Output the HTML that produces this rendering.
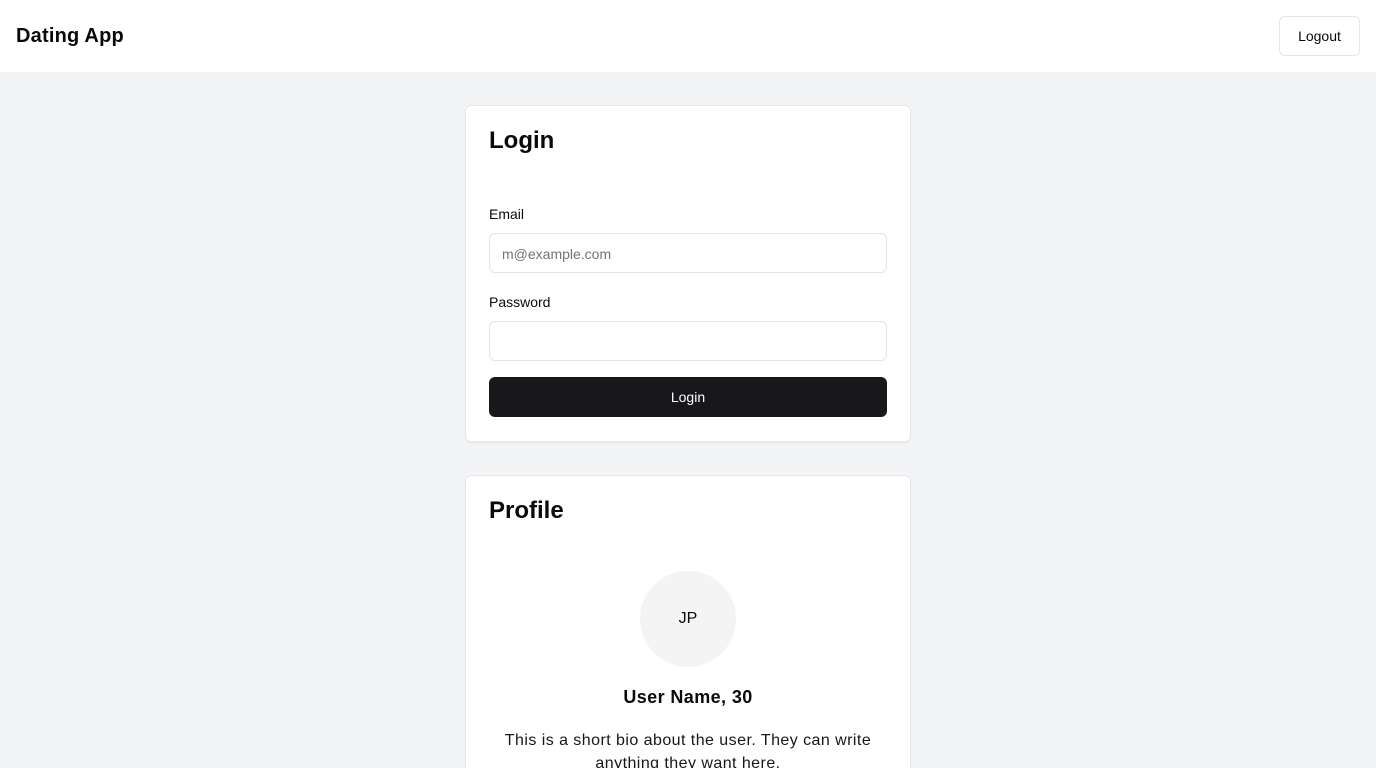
<!DOCTYPE html>
<html style="overflow:hidden"><head><meta charset="utf-8"><style>
*{box-sizing:border-box;margin:0;padding:0}
body{width:1376px;height:768px;overflow:hidden;background:#f3f4f6;font-family:"Liberation Sans",Arial,sans-serif;color:#0a0a0a;position:relative}
.hdr{position:absolute;left:0;top:0;width:1376px;height:72px;background:#fff}
.abs{position:absolute}
.card{position:absolute;left:465px;width:446px;background:#fff;border:1px solid #e5e7eb;border-radius:6px;box-shadow:0 1px 2px rgba(0,0,0,.05)}
.inp{position:absolute;left:489px;width:398px;height:40px;border:1px solid #e4e4e7;border-radius:6px;background:#fff}
</style></head><body>
<div class="hdr"></div>
<div class="abs" style="left:16px;top:24px;font-size:20px;font-weight:bold;line-height:24px;letter-spacing:0.2px">Dating App</div>
<div class="abs" style="left:1279px;top:16px;width:81px;height:40px;border:1px solid #e4e4e7;border-radius:6px;background:#fff;font-size:14px;line-height:38px;text-align:center">Logout</div>

<div class="card" style="top:105px;height:337px"></div>
<div class="abs" style="left:489px;top:126px;font-size:24px;font-weight:bold;line-height:30px">Login</div>
<div class="abs" style="left:489px;top:205px;font-size:14px;line-height:18px">Email</div>
<div class="inp" style="top:233px"></div>
<div class="abs" style="left:502px;top:245px;font-size:14px;line-height:18px;color:#737373">m@example.com</div>
<div class="abs" style="left:489px;top:293px;font-size:14px;line-height:18px">Password</div>
<div class="inp" style="top:321px"></div>
<div class="abs" style="left:489px;top:377px;width:398px;height:40px;background:#18181b;border-radius:6px;color:#fff;font-size:14px;line-height:40px;text-align:center">Login</div>

<div class="card" style="top:475px;height:320px"></div>
<div class="abs" style="left:489px;top:496px;font-size:24px;font-weight:bold;line-height:30px">Profile</div>
<div class="abs" style="left:640px;top:571px;width:96px;height:96px;border-radius:50%;background:#f4f4f5;font-size:16px;line-height:96px;text-align:center">JP</div>
<div class="abs" style="left:489px;top:685px;width:398px;text-align:center;font-size:18px;font-weight:bold;line-height:24px;letter-spacing:0.4px">User Name, 30</div>
<div class="abs" style="left:489px;top:729px;width:398px;text-align:center;font-size:16px;line-height:23px;color:#171717;letter-spacing:0.45px">This is a short bio about the user. They can write anything they want here.</div>
</body></html>
